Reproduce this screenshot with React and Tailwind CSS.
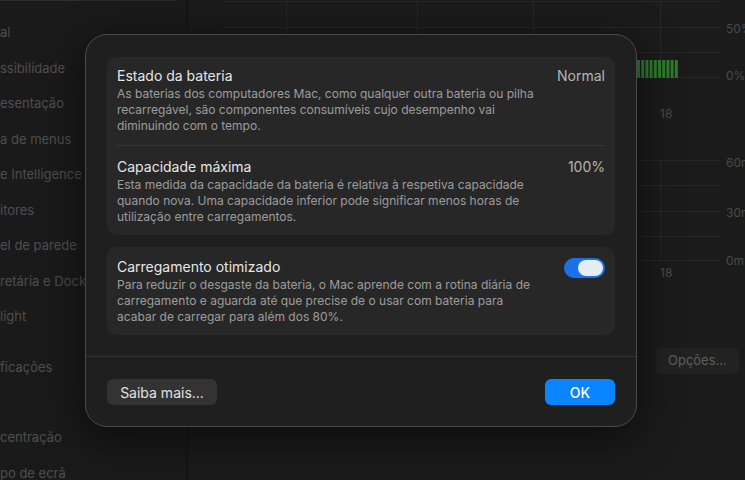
import React from 'react';

const sidebarItems = [
  { label: 'al' },
  { label: 'ssibilidade' },
  { label: 'esentação' },
  { label: 'a de menus' },
  { label: 'e Intelligence e Siri' },
  { label: 'itores' },
  { label: 'el de parede' },
  { label: 'retária e Dock' },
  { label: 'light' },
  { label: 'ficações', gap: 'mt-[15px]' },
  { label: 'centração', gap: 'mt-[35px]' },
  { label: 'po de ecrã' },
];

const Toggle = () => (
  <div className="w-[41px] h-[20px] rounded-full bg-[#1a72ea] flex items-center justify-end px-[2px] shrink-0">
    <div className="w-[25px] h-[16px] rounded-full bg-[#e6ecf8]" />
  </div>
);

const Row = ({ title, value, children, right }) => (
  <div className="flex items-start justify-between">
    <div className="w-[428px]">
      <div className="text-[14px] leading-[18px] text-[#e6e6e6]">{title}</div>
      <p className="mt-[1px] text-[12px] leading-[16px] text-[#9d9d9d]">{children}</p>
    </div>
    {right || <div className="text-[14px] leading-[18px] text-[#b4b4b4]">{value}</div>}
  </div>
);

export default function App() {
  return (
    <div
      className="relative w-[745px] h-[480px] overflow-hidden bg-[#181818] flex"
      style={{ fontFamily: 'Inter, "Noto Sans", sans-serif' }}
    >
      {/* sidebar (dimmed, behind the sheet) */}
      <aside className="w-[188px] shrink-0 bg-[#1a1a1a] border-r border-[#111] flex flex-col">
        <div className="h-[4px] w-[176px] border-b border-[#2c2c2c] bg-[#202020]" />
        <ul className="mt-[14px] flex flex-col text-[13px] text-[#4e4e4e]">
          {sidebarItems.map((item) => (
            <li
              key={item.label}
              className={`h-[35.5px] flex items-center whitespace-nowrap ${item.gap || ''}`}
            >
              {item.label}
            </li>
          ))}
        </ul>
      </aside>

      {/* main pane with charts */}
      <main className="relative flex-1 bg-[#1b1b1b]">
        <svg className="absolute left-0 top-0" width="557" height="480">
          <g stroke="#262626" strokeWidth="1">
            <line x1="35" y1="1.5" x2="532" y2="1.5" />
            <line x1="35" y1="27.5" x2="532" y2="27.5" />
            <line x1="35" y1="52.5" x2="532" y2="52.5" />
            <line x1="35" y1="77.5" x2="532" y2="77.5" />
            <line x1="98.5" y1="0" x2="98.5" y2="78" />
            <line x1="229.5" y1="0" x2="229.5" y2="78" />
            <line x1="345.5" y1="0" x2="345.5" y2="78" />
            <line x1="472.5" y1="0" x2="472.5" y2="78" />
            <line x1="35" y1="160.5" x2="532" y2="160.5" />
            <line x1="35" y1="185.5" x2="532" y2="185.5" />
            <line x1="35" y1="211.5" x2="532" y2="211.5" />
            <line x1="35" y1="236.5" x2="532" y2="236.5" />
            <line x1="35" y1="260.5" x2="532" y2="260.5" />
            <line x1="472.5" y1="160" x2="472.5" y2="261" />
          </g>
          <g fill="#2f7a2f">
            {Array.from({ length: 10 }).map((_, i) => (
              <rect key={i} x={449 + i * 4.2} y="60" width="3" height="18" />
            ))}
          </g>
        </svg>
        <span className="absolute left-[538px] top-[20px] text-[12px] text-[#4a4a4a]">50%</span>
        <span className="absolute left-[538px] top-[67px] text-[12px] text-[#4a4a4a]">0%</span>
        <span className="absolute left-[472px] top-[105px] text-[12px] text-[#4a4a4a]">18</span>
        <span className="absolute left-[538px] top-[154px] text-[12px] text-[#4a4a4a]">60m</span>
        <span className="absolute left-[538px] top-[204px] text-[12px] text-[#4a4a4a]">30m</span>
        <span className="absolute left-[538px] top-[252px] text-[12px] text-[#4a4a4a]">0m</span>
        <span className="absolute left-[472px] top-[264px] text-[12px] text-[#4a4a4a]">18</span>
        <div className="absolute left-[468px] top-[348px] h-[26px] px-[12px] flex items-center rounded-[6px] bg-[#222] text-[13px] text-[#5e5e5e]">
          Opções...
        </div>
      </main>

      {/* battery health sheet */}
      <div className="absolute left-[85px] top-[34px] w-[552px] h-[393px] rounded-[22px] border border-[#4a4a4a] bg-[#1f1f1f] shadow-[0_10px_40px_rgba(0,0,0,0.6)] flex flex-col">
        <div className="flex flex-col gap-[12px] px-[21px] pt-[22px]">
          <section className="rounded-[9px] bg-[#272727] px-[10px]">
            <div className="pt-[10px] pb-[11px] border-b border-[#353535]">
              <Row title="Estado da bateria" value="Normal">
                As baterias dos computadores Mac, como qualquer outra bateria ou pilha recarregável, são componentes consumíveis cujo desempenho vai diminuindo com o tempo.
              </Row>
            </div>
            <div className="pt-[12px] pb-[10px]">
              <Row title="Capacidade máxima" value="100%">
                Esta medida da capacidade da bateria é relativa à respetiva capacidade quando nova. Uma capacidade inferior pode significar menos horas de utilização entre carregamentos.
              </Row>
            </div>
          </section>
          <section className="rounded-[9px] bg-[#272727] px-[10px] pt-[11px] pb-[10px]">
            <Row title="Carregamento otimizado" right={<Toggle />}>
              Para reduzir o desgaste da bateria, o Mac aprende com a rotina diária de carregamento e aguarda até que precise de o usar com bateria para acabar de carregar para além dos 80%.
            </Row>
          </section>
        </div>
        <div className="mt-[21px] border-t border-[#333]" />
        <div className="flex items-center justify-between px-[21px] pt-[22px]">
          <button className="h-[26px] w-[110px] rounded-[6px] bg-[#333333] text-[14px] text-[#e2e2e2]">
            Saiba mais...
          </button>
          <button className="h-[26px] w-[70px] rounded-[6px] bg-[#0a84ff] text-[14px] font-medium text-white">
            OK
          </button>
        </div>
      </div>
    </div>
  );
}
